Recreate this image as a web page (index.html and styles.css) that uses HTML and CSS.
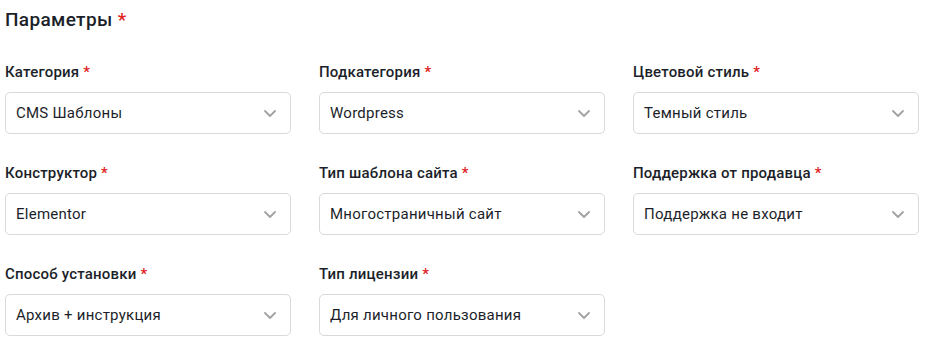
FILE: index.html
```html
<!DOCTYPE html>
<html lang="ru">
<head>
    <meta charset="UTF-8">
    <meta name="viewport" content="width=device-width, initial-scale=1.0">
    <title>Параметры</title>
    <link rel="stylesheet" href="styles.css">
</head>
<body>

    <h2 class="section-title">Параметры <span class="req">*</span></h2>

    <div class="fields">
        <div class="field">
            <label class="field-label">Категория <span class="req">*</span></label>
            <div class="select">
                <span class="select-value">CMS Шаблоны</span>
                <svg class="chevron" width="12" height="7" viewBox="0 0 12 7"><path d="M1 1l5 5 5-5" fill="none" stroke="#a3a3a3" stroke-width="1.8" stroke-linecap="round" stroke-linejoin="round"/></svg>
            </div>
        </div>

        <div class="field">
            <label class="field-label">Подкатегория <span class="req">*</span></label>
            <div class="select">
                <span class="select-value">Wordpress</span>
                <svg class="chevron" width="12" height="7" viewBox="0 0 12 7"><path d="M1 1l5 5 5-5" fill="none" stroke="#a3a3a3" stroke-width="1.8" stroke-linecap="round" stroke-linejoin="round"/></svg>
            </div>
        </div>

        <div class="field">
            <label class="field-label">Цветовой стиль <span class="req">*</span></label>
            <div class="select">
                <span class="select-value">Темный стиль</span>
                <svg class="chevron" width="12" height="7" viewBox="0 0 12 7"><path d="M1 1l5 5 5-5" fill="none" stroke="#a3a3a3" stroke-width="1.8" stroke-linecap="round" stroke-linejoin="round"/></svg>
            </div>
        </div>

        <div class="field">
            <label class="field-label">Конструктор <span class="req">*</span></label>
            <div class="select">
                <span class="select-value">Elementor</span>
                <svg class="chevron" width="12" height="7" viewBox="0 0 12 7"><path d="M1 1l5 5 5-5" fill="none" stroke="#a3a3a3" stroke-width="1.8" stroke-linecap="round" stroke-linejoin="round"/></svg>
            </div>
        </div>

        <div class="field">
            <label class="field-label">Тип шаблона сайта <span class="req">*</span></label>
            <div class="select">
                <span class="select-value">Многостраничный сайт</span>
                <svg class="chevron" width="12" height="7" viewBox="0 0 12 7"><path d="M1 1l5 5 5-5" fill="none" stroke="#a3a3a3" stroke-width="1.8" stroke-linecap="round" stroke-linejoin="round"/></svg>
            </div>
        </div>

        <div class="field">
            <label class="field-label">Поддержка от продавца <span class="req">*</span></label>
            <div class="select">
                <span class="select-value">Поддержка не входит</span>
                <svg class="chevron" width="12" height="7" viewBox="0 0 12 7"><path d="M1 1l5 5 5-5" fill="none" stroke="#a3a3a3" stroke-width="1.8" stroke-linecap="round" stroke-linejoin="round"/></svg>
            </div>
        </div>

        <div class="field">
            <label class="field-label">Способ установки <span class="req">*</span></label>
            <div class="select">
                <span class="select-value">Архив + инструкция</span>
                <svg class="chevron" width="12" height="7" viewBox="0 0 12 7"><path d="M1 1l5 5 5-5" fill="none" stroke="#a3a3a3" stroke-width="1.8" stroke-linecap="round" stroke-linejoin="round"/></svg>
            </div>
        </div>

        <div class="field">
            <label class="field-label">Тип лицензии <span class="req">*</span></label>
            <div class="select">
                <span class="select-value">Для личного пользования</span>
                <svg class="chevron" width="12" height="7" viewBox="0 0 12 7"><path d="M1 1l5 5 5-5" fill="none" stroke="#a3a3a3" stroke-width="1.8" stroke-linecap="round" stroke-linejoin="round"/></svg>
            </div>
        </div>
    </div>

</body>
</html>
```

FILE: styles.css
```css
body {
    font-family: Roboto, 'Liberation Sans', sans-serif;
    background-color: #fff;
    margin: 0;
    padding: 8px 5px 0 5px;
    color: #1c1f2a;
}

.section-title {
    margin: 0 0 30px 0;
    font-size: 19px;
    line-height: 24px;
    font-weight: 500;
    letter-spacing: 0.35px;
}

.req {
    color: #e0201b;
}

.fields {
    display: grid;
    grid-template-columns: repeat(3, 286px);
    column-gap: 28px;
    row-gap: 29px;
}

.field-label {
    display: block;
    font-size: 15px;
    line-height: 20px;
    font-weight: 500;
    letter-spacing: 0.2px;
    margin-bottom: 10px;
}

.select {
    display: flex;
    align-items: center;
    justify-content: space-between;
    height: 42px;
    box-sizing: border-box;
    padding: 0 14px 0 10px;
    border: 1px solid #d9d9d9;
    border-radius: 5px;
    background-color: #fff;
}

.select-value {
    font-size: 15px;
    letter-spacing: 0.25px;
    color: #1c1f2a;
}

.chevron {
    display: block;
    margin-top: 1px;
}
```
